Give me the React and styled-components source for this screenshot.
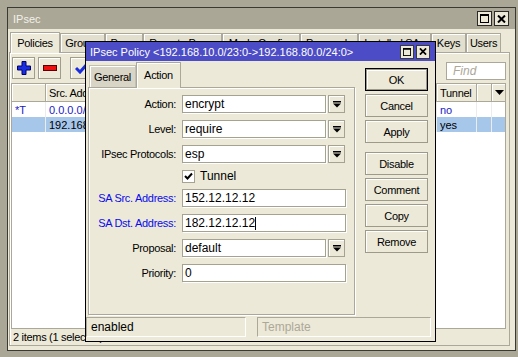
import React from 'react';
import styled, { createGlobalStyle } from 'styled-components';

const GlobalStyle = createGlobalStyle`
  html, body { margin: 0; padding: 0; }
  body {
    background: #aba796;
    font-family: "Liberation Sans", Arial, sans-serif;
    font-size: 11px;
    color: #000;
  }
  * { box-sizing: border-box; }
`;

const mainTabs = [
  { label: 'Policies', width: 50, active: true },
  { label: 'Groups', width: 45 },
  { label: 'Peers', width: 38 },
  { label: 'Remote Peers', width: 79 },
  { label: 'Mode Configs', width: 78 },
  { label: 'Proposals', width: 58 },
  { label: 'Installed SAs', width: 73 },
  { label: 'Keys', width: 35 },
  { label: 'Users', width: 35 },
];

// flags | src address | (columns under the dialog) | tunnel | blank | menu
const columns = '34px 100px 291px 40px 15px 15px';

const policies = [
  { flags: '*T', src: '0.0.0.0/0', tunnel: 'no', dynamic: true },
  { flags: '', src: '192.168.10.0/23', tunnel: 'yes', selected: true },
];

function MaxIcon({ size = 9 }) {
  return (
    <svg width={size} height={size} viewBox="0 0 9 9">
      <rect x="0.5" y="0.5" width="8" height="8" fill="none" stroke="#000" />
      <rect x="0" y="0" width="9" height="2" fill="#000" />
    </svg>
  );
}

function CloseIcon({ size = 9 }) {
  return (
    <svg width={size} height={size - 1} viewBox="0 0 9 8">
      <path d="M1 0.5 L8 7.5 M8 0.5 L1 7.5" stroke="#000" strokeWidth="2" />
    </svg>
  );
}

function DropIcon() {
  return (
    <svg width="8" height="7" viewBox="0 0 8 7">
      <rect x="0" y="0" width="8" height="1.5" fill="#000" />
      <path d="M0 2.5 H8 L4 6.5 Z" fill="#000" />
    </svg>
  );
}

function App() {
  return (
    <>
      <GlobalStyle />
      <Desktop>
        <Window>
          <WinTitle>
            <span>IPsec</span>
            <TitleButtons>
              <WinButton><MaxIcon /></WinButton>
              <WinButton><CloseIcon /></WinButton>
            </TitleButtons>
          </WinTitle>
          <WinBody>
            <TabRow>
              {mainTabs.map((t) => (
                <MainTab key={t.label} $w={t.width} $active={t.active}>{t.label}</MainTab>
              ))}
            </TabRow>
            <MainPanel>
              <Toolbar>
                <ToolButton>
                  <svg width="14" height="14" viewBox="0 0 14 14">
                    <path d="M5 0.5 H9 V5 H13.5 V9 H9 V13.5 H5 V9 H0.5 V5 H5 Z" fill="#1a2ee0" stroke="#00006a" />
                  </svg>
                </ToolButton>
                <ToolButton>
                  <svg width="14" height="6" viewBox="0 0 14 6">
                    <rect x="0.5" y="0.5" width="13" height="5" fill="#ee1010" stroke="#5a0000" />
                  </svg>
                </ToolButton>
                <ToolButton $sep>
                  <svg width="14" height="12" viewBox="0 0 14 12">
                    <path d="M1 6 L5 10 L13 1" fill="none" stroke="#1a2ee0" strokeWidth="3" />
                  </svg>
                </ToolButton>
                <FindBox>Find</FindBox>
              </Toolbar>
              <Table>
                <HeadRow>
                  <HeadCell />
                  <HeadCell>Src. Address</HeadCell>
                  <HeadCell />
                  <HeadCell>Tunnel</HeadCell>
                  <HeadCell />
                  <HeadCell $center>
                    <svg width="9" height="5" viewBox="0 0 9 5"><path d="M0 0 H9 L4.5 5 Z" fill="#000" /></svg>
                  </HeadCell>
                </HeadRow>
                {policies.map((p, i) => (
                  <BodyRow key={i} $selected={p.selected} $dynamic={p.dynamic}>
                    <Cell>{p.flags}</Cell>
                    <Cell>{p.src}</Cell>
                    <Cell />
                    <Cell>{p.tunnel}</Cell>
                    <Cell />
                    <Cell />
                  </BodyRow>
                ))}
                <TableFill />
              </Table>
              <WinStatus>2 items (1 selected)</WinStatus>
            </MainPanel>
          </WinBody>
        </Window>

        <Dialog>
          <DialogTitle>
            <span>IPsec Policy &lt;192.168.10.0/23:0-&gt;192.168.80.0/24:0&gt;</span>
            <TitleButtons>
              <DlgButton><MaxIcon size={8} /></DlgButton>
              <DlgButton><CloseIcon size={8} /></DlgButton>
            </TitleButtons>
          </DialogTitle>
          <DialogBody>
            <LeftCol>
              <DlgTabs>
                <DlgTab>General</DlgTab>
                <DlgTab $active>Action</DlgTab>
              </DlgTabs>
              <FormPanel>
                <FormRow>
                  <Label>Action:</Label>
                  <Field $w={144}>encrypt</Field>
                  <DropButton><DropIcon /></DropButton>
                </FormRow>
                <FormRow>
                  <Label>Level:</Label>
                  <Field $w={144}>require</Field>
                  <DropButton><DropIcon /></DropButton>
                </FormRow>
                <FormRow>
                  <Label>IPsec Protocols:</Label>
                  <Field $w={144}>esp</Field>
                  <DropButton><DropIcon /></DropButton>
                </FormRow>
                <CheckRow>
                  <Label />
                  <CheckBox>
                    <svg width="9" height="9" viewBox="0 0 9 9">
                      <path d="M1 4 L3.5 6.5 L8 1.5" fill="none" stroke="#000" strokeWidth="2" />
                    </svg>
                  </CheckBox>
                  <CheckText>Tunnel</CheckText>
                </CheckRow>
                <FormRow>
                  <Label $blue>SA Src. Address:</Label>
                  <Field $w={164}>152.12.12.12</Field>
                </FormRow>
                <FormRow>
                  <Label $blue>SA Dst. Address:</Label>
                  <Field $w={164}>182.12.12.12<Caret /></Field>
                </FormRow>
                <FormRow>
                  <Label>Proposal:</Label>
                  <Field $w={144}>default</Field>
                  <DropButton><DropIcon /></DropButton>
                </FormRow>
                <FormRow>
                  <Label>Priority:</Label>
                  <Field $w={164}>0</Field>
                </FormRow>
              </FormPanel>
            </LeftCol>
            <ButtonCol>
              <DlgBtn $default>OK</DlgBtn>
              <DlgBtn>Cancel</DlgBtn>
              <DlgBtn>Apply</DlgBtn>
              <DlgBtn $gap>Disable</DlgBtn>
              <DlgBtn>Comment</DlgBtn>
              <DlgBtn>Copy</DlgBtn>
              <DlgBtn>Remove</DlgBtn>
            </ButtonCol>
          </DialogBody>
          <DlgStatus>
            <StatusCell $w={160}>enabled</StatusCell>
            <StatusCell $w={174} $muted>Template</StatusCell>
          </DlgStatus>
        </Dialog>
      </Desktop>
    </>
  );
}

/* STYLED COMPONENTS */
const Desktop = styled.div`
  position: relative;
  width: 518px;
  height: 357px;
  padding: 7px 0 0 7px;
  overflow: hidden;
`

const Window = styled.div`
  width: 509px;
  height: 344px;
  border: 1px solid #3a3a34;
  background: #ece9d8;
  display: flex;
  flex-direction: column;
`

const WinTitle = styled.div`
  height: 21px;
  flex: none;
  background: #aba796;
  color: #f2f1ea;
  display: flex;
  align-items: center;
  justify-content: space-between;
  padding: 0 6px 0 5px;
  font-size: 11px;
`

const TitleButtons = styled.div`
  display: flex;
  gap: 2px;
`

const WinButton = styled.div`
  width: 15px;
  height: 15px;
  background: #ece9d8;
  border: 1px solid #2a2a2a;
  display: flex;
  align-items: center;
  justify-content: center;
`

const WinBody = styled.div`
  flex: 1;
  display: flex;
  flex-direction: column;
  padding: 2px 5px 4px 1px;
  min-height: 0;
`

const TabRow = styled.div`
  display: flex;
  align-items: flex-end;
  height: 21px;
  padding-left: 1px;
  flex: none;
`

const MainTab = styled.div`
  width: ${(p) => p.$w}px;
  height: ${(p) => (p.$active ? 21 : 19)}px;
  background: ${(p) => (p.$active ? '#ece9d8' : '#e2dfcf')};
  border: 1px solid #aca899;
  border-bottom: none;
  box-shadow: inset 1px 1px 0 #fff;
  display: flex;
  align-items: center;
  justify-content: center;
  letter-spacing: -0.3px;
  white-space: nowrap;
  position: relative;
  z-index: ${(p) => (p.$active ? 1 : 0)};
  margin-bottom: ${(p) => (p.$active ? -1 : 0)}px;
  padding-bottom: ${(p) => (p.$active ? 1 : 0)}px;
`

const MainPanel = styled.div`
  flex: 1;
  min-height: 0;
  border: 1px solid #aca899;
  box-shadow: inset 1px 1px 0 #fff;
  padding: 4px 3px 0 1px;
  display: flex;
  flex-direction: column;
`

const Toolbar = styled.div`
  display: flex;
  align-items: flex-start;
  gap: 3px;
  height: 22px;
  margin-bottom: 4px;
  padding-left: 1px;
  flex: none;
`

const ToolButton = styled.div`
  width: 23px;
  height: 22px;
  border: 1px solid #a09d8d;
  box-shadow: inset 1px 1px 0 #fff;
  display: flex;
  align-items: center;
  justify-content: center;
  margin-left: ${(p) => (p.$sep ? 6 : 0)}px;
`

const FindBox = styled.div`
  margin-left: auto;
  margin-top: 5px;
  width: 60px;
  height: 18px;
  background: #fff;
  border: 1px solid #aca899;
  color: #aca899;
  font-style: italic;
  font-size: 12px;
  padding-left: 6px;
  display: flex;
  align-items: center;
`

const Table = styled.div`
  flex: 1;
  min-height: 0;
  background: #fff;
  border: 1px solid #aca899;
  display: flex;
  flex-direction: column;
  overflow: hidden;
`

const HeadRow = styled.div`
  display: grid;
  grid-template-columns: ${columns};
  height: 18px;
  background: #ece9d8;
  flex: none;
`

const HeadCell = styled.div`
  border-right: 1px solid #aca899;
  border-bottom: 1px solid #aca899;
  box-shadow: inset 1px 1px 0 #fff;
  padding-left: ${(p) => (p.$center ? 0 : 3)}px;
  display: flex;
  align-items: center;
  justify-content: ${(p) => (p.$center ? 'center' : 'flex-start')};
  letter-spacing: -0.3px;
  white-space: nowrap;
  overflow: hidden;
`

const BodyRow = styled.div`
  display: grid;
  grid-template-columns: ${columns};
  height: 15px;
  flex: none;
  background: ${(p) => (p.$selected ? '#a6c6ea' : '#fff')};
  color: ${(p) => (p.$dynamic ? '#2121c4' : '#000')};
`

const Cell = styled.div`
  border-right: 1px solid #ececec;
  padding-left: 3px;
  display: flex;
  align-items: center;
  white-space: nowrap;
  overflow: hidden;
  font-size: 11px;
`

const TableFill = styled.div`
  flex: 1;
`

const WinStatus = styled.div`
  height: 16px;
  flex: none;
  display: flex;
  align-items: center;
  padding-left: 2px;
  letter-spacing: -0.3px;
`

const Dialog = styled.div`
  position: absolute;
  left: 85px;
  top: 41px;
  width: 351px;
  height: 301px;
  border: 1px solid #000;
  background: #ece9d8;
  display: flex;
  flex-direction: column;
`

const DialogTitle = styled.div`
  height: 19px;
  flex: none;
  background: #4c4cc6;
  color: #fff;
  display: flex;
  align-items: center;
  justify-content: space-between;
  padding: 0 5px 0 4px;
  font-size: 11px;
  white-space: nowrap;
`

const DlgButton = styled.div`
  width: 14px;
  height: 14px;
  background: #ece9d8;
  border: 1px solid #3a3a3a;
  display: flex;
  align-items: center;
  justify-content: center;
`

const DialogBody = styled.div`
  flex: 1;
  display: flex;
  padding: 1px 0 0 2px;
`

const LeftCol = styled.div`
  display: flex;
  flex-direction: column;
  width: 267px;
`

const DlgTabs = styled.div`
  display: flex;
  align-items: flex-end;
  height: 25px;
  padding-left: 1px;
`

const DlgTab = styled.div`
  height: ${(p) => (p.$active ? 26 : 22)}px;
  width: ${(p) => (p.$active ? 45 : 47)}px;
  background: ${(p) => (p.$active ? '#ece9d8' : '#d9d5c6')};
  border: 1px solid ${(p) => (p.$active ? '#aca899' : '#c4c0b0')};
  border-bottom: none;
  box-shadow: inset 1px 1px 0 #fff;
  display: flex;
  align-items: center;
  justify-content: center;
  letter-spacing: -0.3px;
  position: relative;
  z-index: ${(p) => (p.$active ? 1 : 0)};
  margin-bottom: ${(p) => (p.$active ? -1 : 0)}px;
  padding-bottom: ${(p) => (p.$active ? 2 : 0)}px;
`

const FormPanel = styled.div`
  height: 228px;
  border: 1px solid #aca899;
  box-shadow: inset 1px 1px 0 #fff, 1px 1px 0 #fff;
  padding-top: 7px;
  display: flex;
  flex-direction: column;
  gap: 7px;
`

const FormRow = styled.div`
  display: flex;
  align-items: center;
  height: 18px;
  gap: 2px;
`

const CheckRow = styled.div`
  display: flex;
  align-items: center;
  height: 12px;
`

const Label = styled.div`
  width: 87px;
  margin-right: 4px;
  text-align: right;
  color: ${(p) => (p.$blue ? '#0a0aee' : '#000')};
  letter-spacing: -0.3px;
  white-space: nowrap;
  flex: none;
`

const Field = styled.div`
  width: ${(p) => p.$w}px;
  height: 18px;
  background: #fff;
  border: 1px solid #a5a291;
  box-shadow: 1px 1px 0 #fff;
  padding-left: 2px;
  font-size: 12px;
  display: flex;
  align-items: center;
  white-space: nowrap;
`

const Caret = styled.span`
  display: inline-block;
  width: 1px;
  height: 13px;
  background: #000;
`

const DropButton = styled.div`
  width: 17px;
  height: 18px;
  border: 1px solid #a5a291;
  box-shadow: inset 1px 1px 0 #fff;
  display: flex;
  align-items: center;
  justify-content: center;
`

const CheckBox = styled.div`
  width: 13px;
  height: 13px;
  margin-left: 2px;
  background: #fff;
  border: 1px solid #a5a291;
  display: flex;
  align-items: center;
  justify-content: center;
`

const CheckText = styled.span`
  margin-left: 5px;
  font-size: 12px;
`

const ButtonCol = styled.div`
  display: flex;
  flex-direction: column;
  gap: 3px;
  margin-left: 10px;
  padding-top: 6px;
`

const DlgBtn = styled.div`
  width: 63px;
  height: 23px;
  border: 1px solid ${(p) => (p.$default ? '#000' : '#9d9a8a')};
  box-shadow: ${(p) => (p.$default ? 'inset 0 0 0 1px #9d9a8a, inset 2px 2px 0 #fff' : 'inset 1px 1px 0 #fff')};
  display: flex;
  align-items: center;
  justify-content: center;
  letter-spacing: -0.3px;
  margin-top: ${(p) => (p.$gap ? 6 : 0)}px;
`

const DlgStatus = styled.div`
  display: flex;
  gap: 11px;
  height: 20px;
  margin: 2px 0 4px 0;
  flex: none;
`

const StatusCell = styled.div`
  width: ${(p) => p.$w}px;
  border: 1px solid;
  border-color: #aca899 #fff #fff #aca899;
  color: ${(p) => (p.$muted ? '#aca899' : '#000')};
  padding-left: 4px;
  display: flex;
  align-items: center;
  font-size: 12px;
`

export default App;
